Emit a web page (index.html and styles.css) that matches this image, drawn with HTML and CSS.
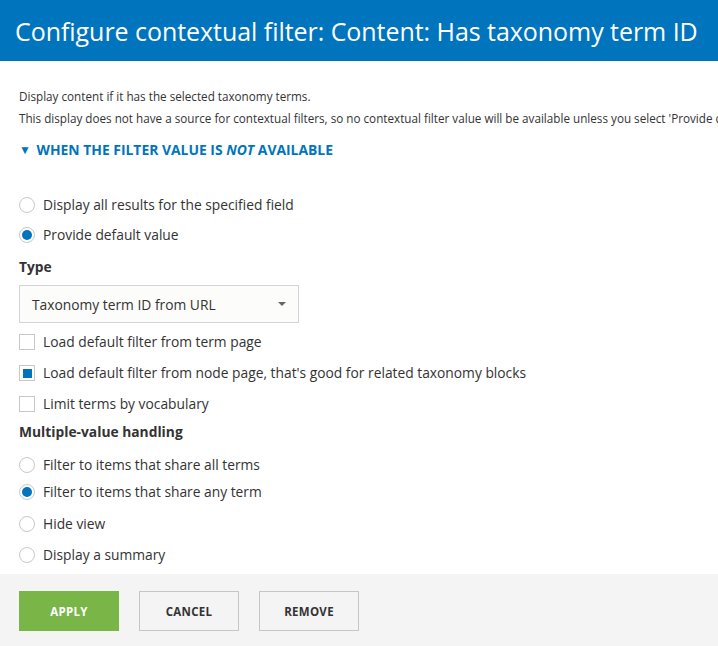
FILE: index.html
```html
<!DOCTYPE html>
<html>
<head>
<meta charset="utf-8">
<link rel="stylesheet" href="styles.css">
</head>
<body>
<div class="dialog">
  <header class="titlebar">
    <h1 class="title">Configure contextual filter: Content: Has taxonomy term ID</h1>
  </header>
  <main class="content">
    <p class="desc first">Display content if it has the selected taxonomy terms.</p>
    <p class="desc">This display does not have a source for contextual filters, so no contextual filter value will be available unless you select 'Provide default value'.</p>
    <div class="summary"><span class="arrow">▼</span> WHEN THE FILTER VALUE IS <em>NOT</em> AVAILABLE</div>

    <div class="group first-group">
      <label class="opt"><span class="radio"></span>Display all results for the specified field</label>
      <label class="opt"><span class="radio checked"></span>Provide default value</label>
    </div>

    <div class="field-label">Type</div>
    <div class="select"><span>Taxonomy term ID from URL</span><span class="caret"></span></div>

    <div class="checks">
      <label class="opt"><span class="check"></span>Load default filter from term page</label>
      <label class="opt"><span class="check checked"></span>Load default filter from node page, that's good for related taxonomy blocks</label>
      <label class="opt"><span class="check"></span>Limit terms by vocabulary</label>
    </div>

    <div class="field-label mv">Multiple-value handling</div>
    <div class="radios2">
      <label class="opt"><span class="radio"></span>Filter to items that share all terms</label>
      <label class="opt"><span class="radio checked"></span>Filter to items that share any term</label>
      <label class="opt gap"><span class="radio"></span>Hide view</label>
      <label class="opt gap2"><span class="radio"></span>Display a summary</label>
    </div>
  </main>
  <footer class="buttons">
    <button class="btn apply">APPLY</button>
    <button class="btn">CANCEL</button>
    <button class="btn">REMOVE</button>
  </footer>
</div>
</body>
</html>
```
FILE: styles.css
```css
* { box-sizing: border-box; }
html, body { margin: 0; padding: 0; background: #fff; }
body {
  font-family: "Open Sans", "Noto Sans", sans-serif;
  color: #333;
  width: 718px;
  height: 646px;
  overflow: hidden;
}
.dialog { display: flex; flex-direction: column; height: 646px; }
.titlebar {
  background: #0074bd;
  height: 61px;
  display: flex;
  align-items: center;
  padding-left: 15px;
  white-space: nowrap;
  overflow: hidden;
}
.title {
  margin: 0;
  font-weight: 400;
  font-size: 25px;
  color: #fff;
  letter-spacing: -0.05px;
}
.content {
  flex: 1;
  padding: 21px 0 0 19px;
  white-space: nowrap;
  overflow: hidden;
}
.desc { margin: 0; font-size: 11.7px; line-height: 16px; }
.desc.first { margin-top: 6px; }
.desc + .desc { margin-top: 6px; }
.summary {
  margin-top: 15px;
  font-size: 13.9px;
  font-weight: 700;
  color: #0074bd;
  line-height: 18px;
}
.summary em { font-style: italic; }
.arrow { font-size: 12px; display: inline-block; margin-right: 2px; position: relative; top: -1px; }
.group.first-group { margin-top: 35px; }
.opt {
  display: flex;
  align-items: center;
  font-size: 13.8px;
  line-height: 20px;
  height: 20px;
}
.group .opt + .opt { margin-top: 10px; }
.radio {
  width: 16px; height: 16px;
  border: 1px solid #c8c8c8;
  border-radius: 50%;
  margin-right: 8px;
  background: #fff;
  display: inline-flex;
  align-items: center;
  justify-content: center;
  flex: none;
}
.radio.checked::after {
  content: "";
  width: 10px; height: 10px;
  border-radius: 50%;
  background: #0074bd;
}
.check {
  width: 16px; height: 16px;
  border: 1px solid #c8c8c8;
  margin-right: 8px;
  background: #fff;
  display: inline-flex;
  align-items: center;
  justify-content: center;
  flex: none;
}
.check.checked::after {
  content: "";
  width: 9px; height: 9px;
  background: #0074bd;
}
.field-label {
  margin-top: 12px;
  font-size: 13.8px;
  font-weight: 700;
  line-height: 20px;
}
.select {
  margin-top: 8px;
  width: 280px;
  height: 38px;
  border: 1px solid #d4d4d4;
  background: #fcfcfa;
  display: flex;
  align-items: center;
  justify-content: space-between;
  padding: 0 12px 0 12px;
  font-size: 13.8px;
}
.caret {
  width: 0; height: 0;
  border-left: 4px solid transparent;
  border-right: 4px solid transparent;
  border-top: 4px solid #666;
}
.checks { margin-top: 9px; }
.checks .opt + .opt { margin-top: 11px; }
.field-label.mv { margin-top: 8px; }
.radios2 { margin-top: 13px; }
.radios2 .opt + .opt { margin-top: 7px; }
.radios2 .opt.gap { margin-top: 12px; }
.radios2 .opt.gap2 { margin-top: 11px; }
.buttons {
  height: 72px;
  background: #f4f4f4;
  display: flex;
  gap: 20px;
  padding: 17px 0 0 19px;
}
.btn {
  width: 100px;
  height: 40px;
  border: 1px solid #c6c6c6;
  background: #f4f4f4;
  font-family: "Open Sans", sans-serif;
  font-weight: 700;
  font-size: 11.5px;
  color: #333;
  letter-spacing: 0.3px;
  padding: 0;
}
.btn.apply {
  background: #7ab547;
  border-color: #7ab547;
  color: #fff;
}
```
